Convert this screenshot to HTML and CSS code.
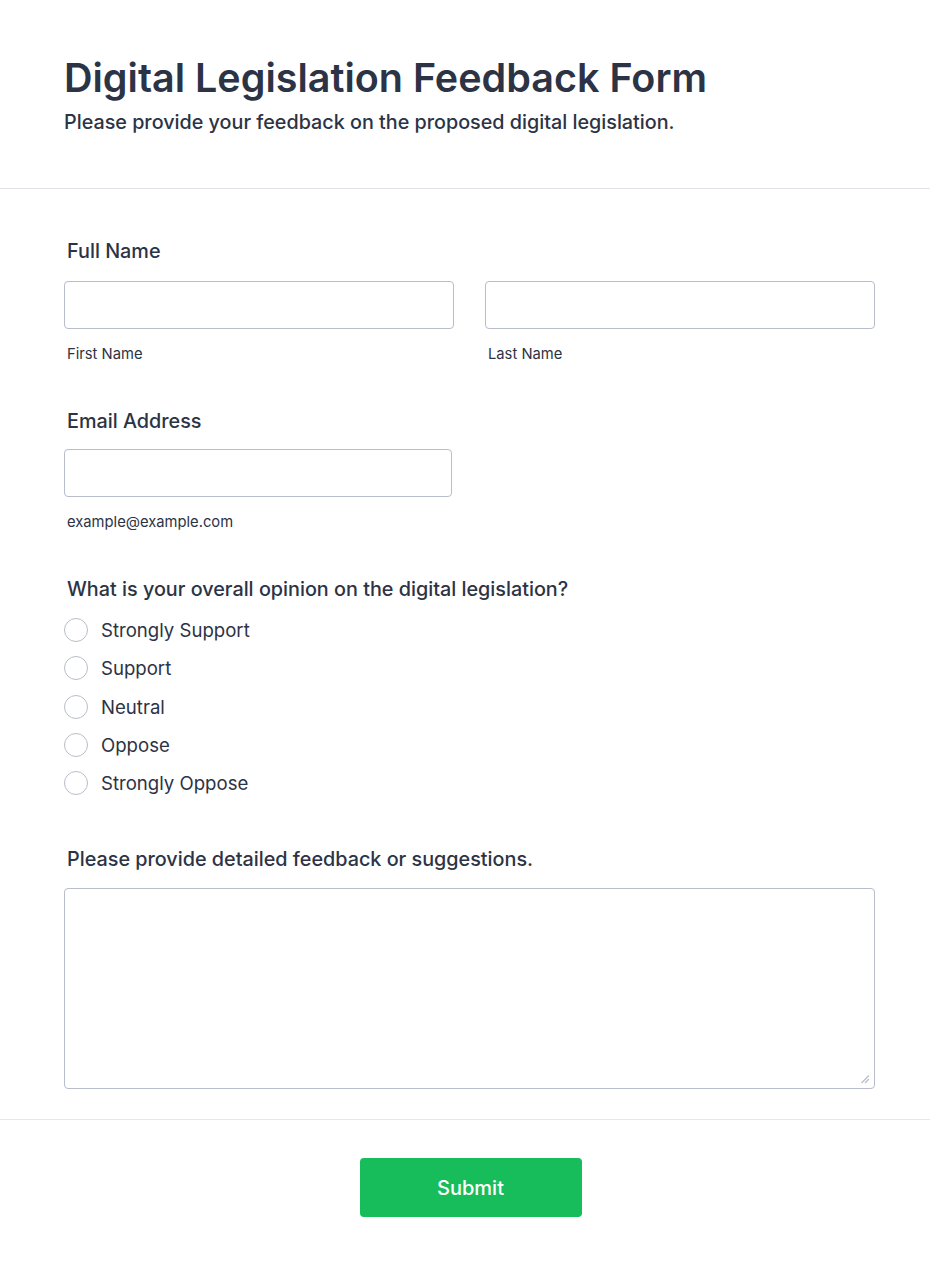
FILE: index.html
```html
<!DOCTYPE html>
<html lang="en">
<head>
<meta charset="utf-8">
<title>Digital Legislation Feedback Form</title>
<link rel="stylesheet" href="styles.css">
</head>
<body>
<div class="page">
  <header class="form-header">
    <h1 class="form-title">Digital Legislation Feedback Form</h1>
    <p class="form-subtitle">Please provide your feedback on the proposed digital legislation.</p>
  </header>

  <form class="form-body">
    <div class="field field-name">
      <div class="field-label">Full Name</div>
      <div class="name-row">
        <div class="name-col">
          <input class="text-input" type="text">
          <div class="sublabel">First Name</div>
        </div>
        <div class="name-col">
          <input class="text-input" type="text">
          <div class="sublabel">Last Name</div>
        </div>
      </div>
    </div>

    <div class="field field-email">
      <div class="field-label">Email Address</div>
      <input class="text-input email-input" type="email">
      <div class="sublabel">example@example.com</div>
    </div>

    <div class="field field-opinion">
      <div class="field-label">What is your overall opinion on the digital legislation?</div>
      <div class="radio-list">
        <label class="radio-item"><span class="radio-circle"></span><span class="radio-text">Strongly Support</span></label>
        <label class="radio-item"><span class="radio-circle"></span><span class="radio-text">Support</span></label>
        <label class="radio-item"><span class="radio-circle"></span><span class="radio-text">Neutral</span></label>
        <label class="radio-item"><span class="radio-circle"></span><span class="radio-text">Oppose</span></label>
        <label class="radio-item"><span class="radio-circle"></span><span class="radio-text">Strongly Oppose</span></label>
      </div>
    </div>

    <div class="field field-feedback">
      <div class="field-label">Please provide detailed feedback or suggestions.</div>
      <div class="textarea-wrap">
        <textarea class="textarea"></textarea>
        <svg class="grip" width="10" height="10" viewBox="0 0 10 10" aria-hidden="true">
          <line x1="1.5" y1="9" x2="9" y2="1.5" stroke="#b9bdc9" stroke-width="1.2"/>
          <line x1="5" y1="9" x2="9" y2="5" stroke="#b9bdc9" stroke-width="1.2"/>
        </svg>
      </div>
    </div>
  </form>

  <footer class="form-footer">
    <button class="submit-btn" type="button">Submit</button>
  </footer>
</div>
</body>
</html>
```

FILE: styles.css
```css
* { box-sizing: border-box; }

html, body {
  margin: 0;
  padding: 0;
  background: #ffffff;
}

body {
  font-family: Inter, "Noto Sans", "Liberation Sans", sans-serif;
  color: #2c3345;
}

.page {
  width: 930px;
}

.form-header {
  height: 189px;
  padding: 54px 64px 0;
  border-bottom: 1px solid #dfe2ea;
}

.form-title {
  margin: 0;
  font-size: 39.5px;
  line-height: 48px;
  font-weight: 600;
  color: #2c3345;
}

.form-subtitle {
  margin: 8px 0 0;
  font-size: 19.75px;
  line-height: 24px;
  font-weight: 500;
  color: #2c3345;
}

.form-body {
  padding: 0 55px 30px 64px;
  border-bottom: 1px solid #e6e8ee;
}

.field-label {
  padding-left: 3px;
  font-size: 19.8px;
  line-height: 24px;
  font-weight: 500;
  color: #2c3345;
}

.field-name { padding-top: 50px; }
.field-name .field-label { margin-bottom: 18px; }

.name-row {
  display: flex;
  gap: 31px;
}

.name-col {
  width: 390px;
}

.text-input {
  display: block;
  width: 100%;
  height: 48px;
  margin: 0;
  border: 1px solid #b8bdc9;
  border-radius: 4px;
  background: #fff;
  font: inherit;
  outline: none;
}

.email-input { width: 388px; }

.sublabel {
  padding-left: 3px;
  margin-top: 16px;
  font-size: 14.75px;
  line-height: 18px;
  color: #2c3345;
}

.field-email { padding-top: 46px; }
.field-email .field-label { margin-bottom: 16px; }
.field-email .sublabel { margin-top: 16px; }

.field-opinion { padding-top: 46px; }
.field-opinion .field-label { margin-bottom: 17px; }

.radio-list {
  display: flex;
  flex-direction: column;
  gap: 14.3px;
}

.radio-item {
  display: flex;
  align-items: center;
  gap: 13px;
  height: 24px;
  font-size: 18.6px;
  line-height: 24px;
  color: #2c3345;
}

.radio-circle {
  width: 24px;
  height: 24px;
  border: 1px solid #b8bdc9;
  border-radius: 50%;
  background: #fff;
  flex: none;
}

.field-feedback { padding-top: 52px; }
.field-feedback .field-label { margin-bottom: 17px; }

.textarea-wrap {
  position: relative;
  width: 811px;
}

.textarea {
  display: block;
  width: 811px;
  height: 201px;
  margin: 0;
  border: 1px solid #b8bdc9;
  border-radius: 4px;
  background: #fff;
  resize: none;
  outline: none;
}

.grip {
  position: absolute;
  right: 5px;
  bottom: 5px;
}

.form-footer {
  display: flex;
  justify-content: center;
  padding-top: 38px;
  padding-bottom: 50px;
}

.submit-btn {
  width: 222px;
  height: 59px;
  margin-left: 11px;
  border: none;
  border-radius: 4px;
  background: #18bd5b;
  color: #ffffff;
  font-family: Inter, "Noto Sans", sans-serif;
  font-size: 20px;
  font-weight: 500;
}
```
